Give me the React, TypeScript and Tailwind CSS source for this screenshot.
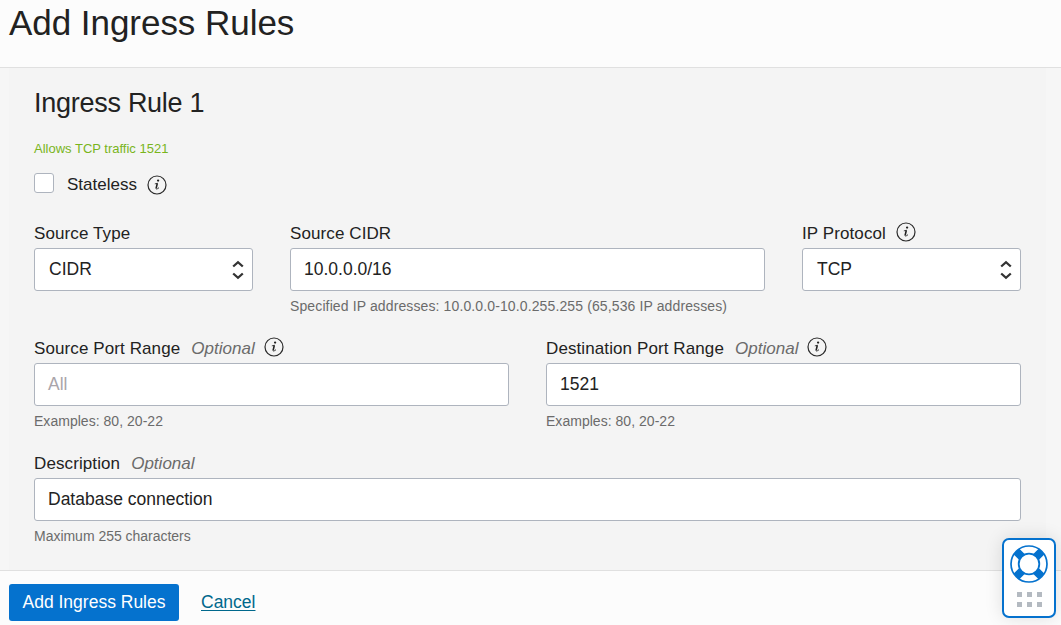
import type { ReactNode } from "react";

function InfoIcon({ className = "" }: { className?: string }) {
  return (
    <svg viewBox="0 0 20 20" className={`size-5 shrink-0 ${className}`} fill="none">
      <circle cx="10" cy="10" r="9" stroke="#2b2b2b" strokeWidth="1.2" />
      <circle cx="11.1" cy="5.6" r="1.15" fill="#222" />
      <path d="M7.8 8.9 L10.6 8.2" stroke="#222" strokeWidth="0.8" />
      <path d="M10.3 8.2 L9.2 13.1" stroke="#222" strokeWidth="1.6" />
      <path d="M8.9 13 Q8.8 15.2 12 12.7" stroke="#222" strokeWidth="0.9" />
    </svg>
  );
}

function Label({ children, optional, info }: { children: ReactNode; optional?: boolean; info?: boolean }) {
  return (
    <div className="flex h-[30px] items-center whitespace-nowrap pt-[2px] text-[17px] leading-[20px] tracking-[0.1px] text-[#222]">
      <span>{children}</span>
      {optional && <span className="ml-[11px] italic tracking-[0.02px] text-[#6b6b6b]">Optional</span>}
      {info && <InfoIcon className={`relative -top-[2px] ${optional ? "ml-[9px]" : "ml-[10px]"}`} />}
    </div>
  );
}

function Box({ children, select }: { children: ReactNode; select?: boolean }) {
  return (
    <div className={`flex h-[43px] items-center justify-between rounded-[3px] border border-[#aeb4be] bg-white pb-[2px] pr-[9px] text-[17.5px] leading-[20px] text-[#222] ${select ? "pl-[14px]" : "pl-[13px]"}`}>
      <span>{children}</span>
      {select && (
        <svg viewBox="0 0 12 20" className="relative left-[0.5px] top-px h-5 w-3" fill="none" stroke="#333" strokeWidth="2.3">
          <path d="M1.2 6.5 L6 2.2 L10.8 6.5 M1.2 13.5 L6 17.8 L10.8 13.5" />
        </svg>
      )}
    </div>
  );
}

function Hint({ children, className = "tracking-[0.03px]" }: { children: ReactNode; className?: string }) {
  return <div className={`mt-[7px] whitespace-nowrap text-[14px] leading-4 text-[#6b6b6b] ${className}`}>{children}</div>;
}

function HelpWidget() {
  return (
    <div className="absolute left-[1002px] top-[538px] flex h-20 w-[54px] flex-col items-center rounded-[7px] border-2 border-[#0572ce] bg-white pt-[5px] shadow-[0_0_18px_rgba(0,0,0,0.12)]">
      <svg viewBox="0 0 38 38" className="h-[38px] w-[38px] shrink-0">
        <g stroke="#0572ce" strokeWidth="8">
          <path d="M6.3 6.3 L31.7 31.7 M31.7 6.3 L6.3 31.7" />
        </g>
        <circle cx="19" cy="19" r="18" fill="none" stroke="#0572ce" strokeWidth="1.7" />
        <circle cx="19" cy="19" r="10.3" fill="white" stroke="#0572ce" strokeWidth="1.8" />
      </svg>
      <div className="mt-[9px] grid grid-cols-3 gap-[5px]">
        {[0, 1, 2, 3, 4, 5].map((n) => (
          <span key={n} className="size-[5px] bg-[#b4bac1]" />
        ))}
      </div>
    </div>
  );
}

export default function App() {
  return (
    <div className="relative flex h-[625px] w-[1061px] flex-col overflow-hidden bg-[#fcfcfc] font-['Liberation_Sans',Arial,sans-serif] text-[#222]">
      <header className="h-[68px] shrink-0 border-b border-[#e0e0e0] pl-[9px]">
        <h1 className="pt-[3px] text-[35px] leading-[40px] tracking-[-0.04px]">Add Ingress Rules</h1>
      </header>
      <main className="h-[502px] shrink-0 bg-[#f6f6f6] pl-[9px] pr-[15px]">
        <section className="h-full bg-[#f4f4f4] px-[25px] pt-[19px]">
          <h2 className="text-[27px] leading-[32px] tracking-[-0.27px]">Ingress Rule 1</h2>
          <p className="mt-[22px] text-[13px] leading-4 text-[#79b51c]">Allows TCP traffic 1521</p>
          <div className="mt-[16px] flex h-5 items-center text-[17px] leading-5">
            <span className="mr-[13px] size-5 rounded-[3px] border border-[#aeb4be] bg-white" />
            <span className="relative top-[2px]">Stateless</span>
            <InfoIcon className="relative top-[2px] ml-[10px]" />
          </div>
          <div className="mt-[25px] grid h-[115px] grid-cols-[219px_475px_219px] gap-x-[37px]">
            <div>
              <Label>Source Type</Label>
              <Box select>CIDR</Box>
            </div>
            <div>
              <Label>Source CIDR</Label>
              <Box>10.0.0.0/16</Box>
              <Hint className="tracking-[0.12px]">Specified IP addresses: 10.0.0.0-10.0.255.255 (65,536 IP addresses)</Hint>
            </div>
            <div>
              <Label info>IP Protocol</Label>
              <Box select>TCP</Box>
            </div>
          </div>
          <div className="grid h-[115px] grid-cols-[475px_475px] gap-x-[37px]">
            <div>
              <Label optional info>Source Port Range</Label>
              <Box><span className="text-[#aaa5aa]">All</span></Box>
              <Hint>Examples: 80, 20-22</Hint>
            </div>
            <div>
              <Label optional info>Destination Port Range</Label>
              <Box>1521</Box>
              <Hint>Examples: 80, 20-22</Hint>
            </div>
          </div>
          <div className="w-[987px]">
            <Label optional>Description</Label>
            <Box>Database connection</Box>
            <Hint className="tracking-[-0.02px]">Maximum 255 characters</Hint>
          </div>
        </section>
      </main>
      <footer className="flex h-[55px] shrink-0 items-start border-t border-[#e0e0e0] pl-[9px] pt-[13px] text-[17.5px] leading-[20px]">
        <button className="h-[37px] w-[170px] whitespace-nowrap rounded-[3px] bg-[#0572ce] pb-[2px] text-white">Add Ingress Rules</button>
        <a className="ml-[22px] mt-[8px] text-[#00688c] underline underline-offset-2">Cancel</a>
      </footer>
      <HelpWidget />
    </div>
  );
}
